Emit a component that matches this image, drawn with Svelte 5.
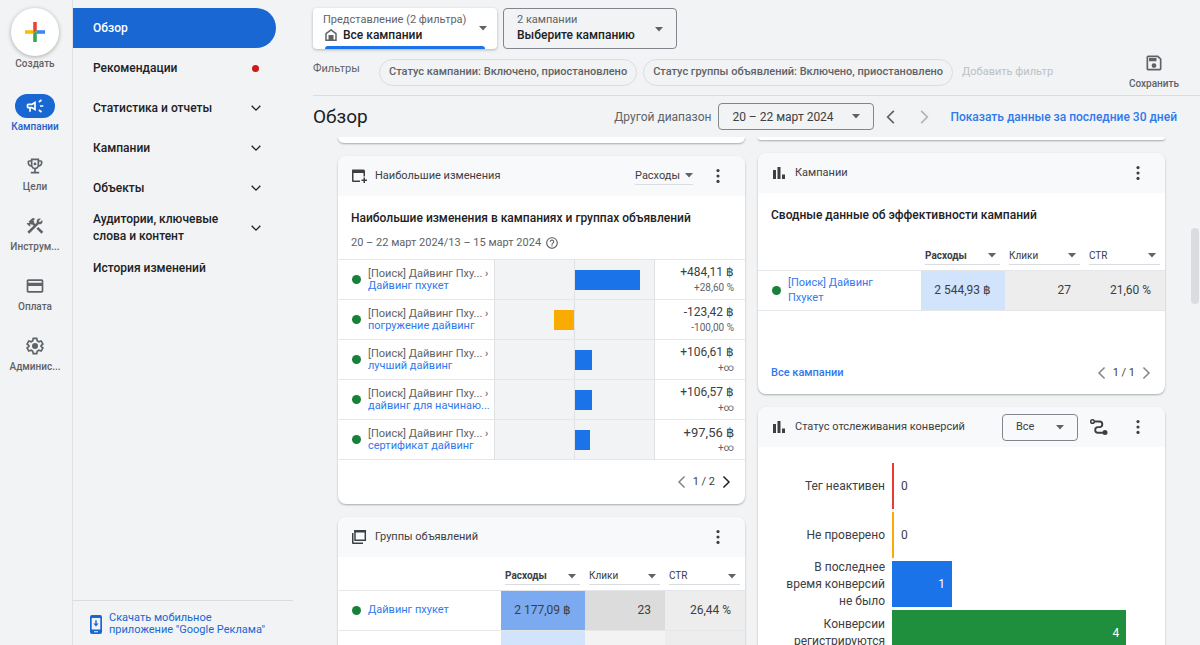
<script>
  const rail = [
    { id: "campaigns", label: "Кампании", active: true },
    { id: "goals", label: "Цели" },
    { id: "tools", label: "Инструм..." },
    { id: "billing", label: "Оплата" },
    { id: "admin", label: "Админис..." },
  ];

  const menu = [
    { label: "Обзор", active: true },
    { label: "Рекомендации", dot: true },
    { label: "Статистика и отчеты", sub: true },
    { label: "Кампании", sub: true },
    { label: "Объекты", sub: true },
    { label: "Аудитории, ключевые слова и контент", sub: true },
    { label: "История изменений" },
  ];

  const filters = [
    "Статус кампании: Включено, приостановлено",
    "Статус группы объявлений: Включено, приостановлено",
  ];

  // share is the bar length in percent of one half of the chart
  const changes = [
    { group: "Дайвинг пхукет", value: "+484,11 ฿", rate: "+28,60 %", share: 83 },
    { group: "погружение дайвинг", value: "-123,42 ฿", rate: "-100,00 %", share: -25 },
    { group: "лучший дайвинг", value: "+106,61 ฿", rate: "+∞", share: 22 },
    { group: "дайвинг для начинаю...", value: "+106,57 ฿", rate: "+∞", share: 22 },
    { group: "сертификат дайвинг", value: "+97,56 ฿", rate: "+∞", share: 20, large: true },
  ];

  const columns = ["Расходы", "Клики", "CTR"];

  const statuses = [
    { label: "Тег неактивен", count: 0, color: "#ea3a33" },
    { label: "Не проверено", count: 0, color: "#fbab04" },
    { label: "В последнее время конверсий не было", count: 1, color: "#1a73e8" },
    { label: "Конверсии регистрируются", count: 4, color: "#1f8f3d" },
  ];
</script>

{#snippet caret()}
  <svg class="caret" viewBox="0 0 8 5" width="8" height="5" aria-hidden="true"><path d="M0 0h8L4 4.6z" /></svg>
{/snippet}

{#snippet chevron(dir)}
  <svg class="chevron {dir}" viewBox="0 0 24 24" width="20" height="20" aria-hidden="true">
    {#if dir === "left"}
      <path d="M15.4 4.6 8 12l7.4 7.4" />
    {:else if dir === "right"}
      <path d="M8.6 4.6 16 12l-7.4 7.4" />
    {:else}
      <path d="M6.8 9.4 12 14.6l5.2-5.2" />
    {/if}
  </svg>
{/snippet}

{#snippet more()}
  <button class="icon-btn more" aria-label="Ещё">
    <svg viewBox="0 0 24 24" width="20" height="20"><circle cx="12" cy="5.500" r="1.900" /><circle cx="12" cy="12" r="1.900" /><circle cx="12" cy="18.500" r="1.900" /></svg>
  </button>
{/snippet}

{#snippet bars()}
  <svg class="card-icon" viewBox="0 0 16 16" width="16" height="16" aria-hidden="true">
    <path d="M2 5h3v9H2zM6.500 2h3v12h-3zM11 9.500h3V14h-3z" />
  </svg>
{/snippet}

{#snippet railIcon(id)}
  <svg viewBox="0 0 24 24" width="20" height="20" aria-hidden="true">
    {#if id === "campaigns"}
      <path d="M18 11v2h4v-2h-4zm-2 6.610c.96.71 2.210 1.650 3.200 2.390.4-.53.8-1.070 1.200-1.600-.99-.74-2.240-1.680-3.200-2.400-.4.540-.8 1.080-1.200 1.610zM20.400 5.600c-.4-.53-.8-1.070-1.200-1.600-.99.74-2.240 1.680-3.200 2.400.4.530.8 1.070 1.200 1.600.96-.72 2.210-1.650 3.200-2.400zM4 9c-1.100 0-2 .9-2 2v2c0 1.100.9 2 2 2h1v4h2v-4h1l5 3V6L8 9H4zm5.030 1.710L11 9.530v4.940l-1.970-1.180-.48-.29H4v-2h4.550l.48-.29z" />
    {:else if id === "goals"}
      <path d="M19 5h-2V3H7v2H5c-1.100 0-2 .9-2 2v1c0 2.550 1.920 4.630 4.390 4.940A5.010 5.010 0 0 0 11 15.900V19H7v2h10v-2h-4v-3.100a5.010 5.010 0 0 0 3.610-2.960C19.080 12.630 21 10.550 21 8V7c0-1.100-.9-2-2-2zM5 8V7h2v3.820C5.840 10.400 5 9.300 5 8zm7 6c-1.650 0-3-1.350-3-3V5h6v6c0 1.650-1.350 3-3 3zm7-6c0 1.300-.84 2.400-2 2.820V7h2v1z" />
      <circle cx="12" cy="9.500" r="1.700" />
    {:else if id === "tools"}
      <path d="m13.783 15.172 2.121-2.121 5.996 5.996-2.121 2.121zM17.500 10c1.930 0 3.500-1.570 3.500-3.500 0-.58-.16-1.120-.41-1.600l-2.700 2.700-1.490-1.490 2.700-2.700c-.48-.25-1.020-.41-1.600-.41C15.570 3 14 4.570 14 6.500c0 .41.080.8.210 1.160l-1.850 1.850-1.780-1.780.71-.71-1.410-1.410L12 3.490a3 3 0 0 0-4.240 0L4.220 7.030l1.410 1.410H2.810l-.71.71 3.540 3.540.71-.71V9.150l1.410 1.410.71-.71 1.780 1.780-7.410 7.410 2.120 2.120L16.340 9.790c.36.130.75.210 1.160.210z" />
    {:else if id === "billing"}
      <path d="M20 4H4c-1.110 0-1.990.89-1.990 2L2 18c0 1.110.89 2 2 2h16c1.110 0 2-.89 2-2V6c0-1.110-.89-2-2-2zm0 14H4v-6h16v6zm0-10H4V6h16v2z" />
    {:else}
      <path class="line" d="M9.900 2.900h4.200l.6 2.900 1.900 1.100 2.800-1 2.100 3.700-2.200 1.900v1l2.200 1.900-2.100 3.700-2.800-1-1.900 1.100-.6 2.900H9.900l-.6-2.900-1.900-1.100-2.800 1-2.100-3.700 2.200-1.900v-1L2.500 9.600l2.100-3.700 2.800 1 1.900-1.100z" />
      <circle cx="12" cy="12" r="3.600" />
    {/if}
  </svg>
{/snippet}

{#snippet metricHead()}
  <thead>
    <tr>
      <td></td>
      {#each columns as column, i}
        <th class:bold={i === 0}>
          <span class="drop metric">
            <select aria-label={column}><option>{column}</option></select>
            {@render caret()}
          </span>
        </th>
      {/each}
    </tr>
  </thead>
{/snippet}

<div class="app">
  <nav class="rail" aria-label="Разделы">
    <button class="create">
      <span class="fab">
        <svg viewBox="0 0 20 20" width="20" height="20" aria-hidden="true">
          <path fill="#ea4335" d="M8.200 0h3.600v8.200L8.200 11.800z" />
          <path fill="#fbbc04" d="M0 8.200h8.200v3.600H0z" />
          <path fill="#4285f4" d="M11.800 8.200H20v3.600h-8.200z" />
          <path fill="#34a853" d="M8.200 11.800l3.600-3.600V20H8.200z" />
        </svg>
      </span>
      Создать
    </button>
    {#each rail as item}
      <a class="rail-item" class:active={item.active} href="#{item.id}">
        <span class="pill">{@render railIcon(item.id)}</span>
        {item.label}
      </a>
    {/each}
  </nav>

  <aside class="side">
    <ul>
      {#each menu as item}
        <li>
          <a class="menu-item" class:active={item.active} href="#menu">
            <span>{item.label}</span>
            {#if item.dot}<i class="alert"></i>{/if}
            {#if item.sub}{@render chevron("down")}{/if}
          </a>
        </li>
      {/each}
    </ul>
    <a class="download" href="#download">
      <svg viewBox="0 0 12 19" width="12" height="19" aria-hidden="true">
        <path fill-rule="evenodd" d="M2 0h8a2 2 0 0 1 2 2v15a2 2 0 0 1-2 2H2a2 2 0 0 1-2-2V2a2 2 0 0 1 2-2zm-.300 3v11.500h8.600V3zM4 16.200v1h4v-1z" />
        <path d="M5.300 5.200h1.400v3.400h1.900L6 11.400 3.400 8.600h1.900z" />
      </svg>
      <span>Скачать мобильное приложение "Google Реклама"</span>
    </a>
  </aside>

  <main>
    <header>
      <div class="pickers">
        <div class="picker view">
          <label for="view">Представление (2 фильтра)</label>
          <div class="drop">
            <svg class="home" viewBox="0 0 12 12" width="12" height="12" aria-hidden="true">
              <path class="line" d="M1 11.300V4.600L6 .9l5 3.700v6.700z" />
              <path d="M3.500 6h5v5.500h-5z" />
            </svg>
            <select id="view"><option>Все кампании</option></select>
          </div>
          {@render caret()}
        </div>
        <div class="picker">
          <label for="campaign">2 кампании</label>
          <div class="drop">
            <select id="campaign"><option>Выберите кампанию</option></select>
          </div>
          {@render caret()}
        </div>
      </div>

      <div class="filters">
        <span class="filters-label">Фильтры</span>
        {#each filters as filter}
          <button class="chip">{filter}</button>
        {/each}
        <button class="add">Добавить фильтр</button>
        <button class="save">
          <svg viewBox="0 0 24 24" width="20" height="20" aria-hidden="true">
            <path d="M17 3H5a2 2 0 0 0-2 2v14c0 1.100.9 2 2 2h14c1.100 0 2-.9 2-2V7zm2 16H5V5h11.170L19 7.830zM12 12.200a2.900 2.900 0 1 0 0 5.800 2.900 2.900 0 0 0 0-5.800zM6 6h9v4H6z" />
          </svg>
          Сохранить
        </button>
      </div>
    </header>

    <div class="title-row">
      <h1>Обзор</h1>
      <span class="range-label">Другой диапазон</span>
      <button class="range">20 – 22 март 2024 {@render caret()}</button>
      <button class="icon-btn step" aria-label="Назад">{@render chevron("left")}</button>
      <button class="icon-btn step" aria-label="Вперёд" disabled>{@render chevron("right")}</button>
      <a class="last30" href="#last30">Показать данные за последние 30 дней</a>
    </div>

    <div class="board">
      <div class="column">
        <div class="card rest tall"></div>

        <section class="card">
          <div class="card-head">
            <svg class="card-icon" viewBox="0 0 16 16" width="16" height="16" aria-hidden="true">
              <path d="M1.500 1.500h11A1.500 1.500 0 0 1 14 3v5.500h-1.500V5h-10v7.500H9V14H2a1 1 0 0 1-1-1V2z" />
              <path d="M12.500 9.500H14v2h2V13h-2v2h-1.500v-2h-2v-1.500h2z" />
            </svg>
            <h2>Наибольшие изменения</h2>
            <span class="drop small">
              <select aria-label="Показатель"><option>Расходы</option></select>
              {@render caret()}
            </span>
            {@render more()}
          </div>
          <h3>Наибольшие изменения в кампаниях и группах объявлений</h3>
          <p class="period">
            20 – 22 март 2024/13 – 15 март 2024
            <svg viewBox="0 0 24 24" width="14" height="14" aria-hidden="true">
              <path d="M11 18h2v-2h-2v2zm1-16C6.480 2 2 6.480 2 12s4.480 10 10 10 10-4.480 10-10S17.520 2 12 2zm0 18c-4.410 0-8-3.590-8-8s3.590-8 8-8 8 3.590 8 8-3.590 8-8 8zm0-14c-2.210 0-4 1.790-4 4h2c0-1.100.9-2 2-2s2 .9 2 2c0 2-3 1.750-3 5h2c0-2.250 3-2.500 3-5 0-2.210-1.790-4-4-4z" />
            </svg>
          </p>
          <table class="changes">
            <tbody>
              {#each changes as row}
                <tr>
                  <th>
                    <div class="entity">
                      <i class="dot"></i>
                      <span class="names">
                        <span class="parent">[Поиск] Дайвинг Пху... <b>›</b></span>
                        <a href="#group">{row.group}</a>
                      </span>
                    </div>
                  </th>
                  <td class="plot">
                    <div class="track">
                      <div class="half neg">
                        {#if row.share < 0}<i style="width: {-row.share}%"></i>{/if}
                      </div>
                      <div class="half pos">
                        {#if row.share > 0}<i style="width: {row.share}%"></i>{/if}
                      </div>
                    </div>
                  </td>
                  <td class="delta">
                    <span class="amount" class:large={row.large}>{row.value}</span>
                    <span class="rate">{row.rate}</span>
                  </td>
                </tr>
              {/each}
            </tbody>
          </table>
          <div class="card-foot">
            <div class="pager">
              <button aria-label="Назад">{@render chevron("left")}</button>
              <span>1 / 2</span>
              <button class="on" aria-label="Вперёд">{@render chevron("right")}</button>
            </div>
          </div>
        </section>

        <section class="card">
          <div class="card-head">
            <svg class="card-icon" viewBox="0 0 16 16" width="16" height="16" aria-hidden="true">
              <path class="line" d="M4 1.700h10.300v9.600H4z" />
              <path d="M3.200 1h11.800v2.500H3.200zM1 4h1.500v9.500H12V15H2a1 1 0 0 1-1-1z" />
            </svg>
            <h2>Группы объявлений</h2>
            {@render more()}
          </div>
          <table class="metrics">
            {@render metricHead()}
            <tbody>
              <tr>
                <th><div class="entity"><i class="dot"></i><a href="#group">Дайвинг пхукет</a></div></th>
                <td class="blue-3">2 177,09 ฿</td>
                <td class="gray-3">23</td>
                <td class="gray-2">26,44 %</td>
              </tr>
              <tr>
                <th></th>
                <td class="blue-1"></td>
                <td class="gray-1"></td>
                <td class="gray-2"></td>
              </tr>
            </tbody>
          </table>
        </section>
      </div>

      <div class="column">
        <div class="card rest"></div>

        <section class="card">
          <div class="card-head">
            {@render bars()}
            <h2>Кампании</h2>
            {@render more()}
          </div>
          <h3>Сводные данные об эффективности кампаний</h3>
          <table class="metrics">
            {@render metricHead()}
            <tbody>
              <tr>
                <th><div class="entity"><i class="dot"></i><a class="wrap" href="#campaign">[Поиск] Дайвинг Пхукет</a></div></th>
                <td class="blue-1">2 544,93 ฿</td>
                <td class="gray-2">27</td>
                <td class="gray-2">21,60 %</td>
              </tr>
            </tbody>
          </table>
          <div class="card-foot spaced">
            <a href="#all">Все кампании</a>
            <div class="pager">
              <button aria-label="Назад">{@render chevron("left")}</button>
              <span>1 / 1</span>
              <button aria-label="Вперёд">{@render chevron("right")}</button>
            </div>
          </div>
        </section>

        <section class="card">
          <div class="card-head">
            {@render bars()}
            <h2>Статус отслеживания конверсий</h2>
            <span class="drop boxed">
              <select aria-label="Статус"><option>Все</option></select>
              {@render caret()}
            </span>
            <button class="icon-btn" aria-label="Путь">
              <svg viewBox="0 0 20 20" width="20" height="20">
                <path class="line path" d="M4.500 4.500h6a2.800 2.800 0 0 1 0 5.600H9a2.800 2.800 0 0 0 0 5.600h6" />
                <circle cx="16" cy="15.600" r="2.500" />
                <circle class="line ring" cx="3.500" cy="4.500" r="1.800" />
              </svg>
            </button>
            {@render more()}
          </div>
          <div class="statuses">
            {#each statuses as status}
              <div class="status">
                <span class="status-label">{status.label}</span>
                <div class="status-track">
                  <div class="status-bar" style="width: calc(2px + {status.count * 21.9}%); background: {status.color}">
                    {#if status.count}<span>{status.count}</span>{/if}
                  </div>
                  {#if !status.count}<span>0</span>{/if}
                </div>
              </div>
            {/each}
          </div>
        </section>
      </div>
      <i class="thumb"></i>
    </div>
  </main>
</div>

<style>
  :global(body) {
    margin: 0;
    background: #f1f3f4;
  }

  .app {
    display: flex;
    height: 100vh;
    overflow: hidden;
    color: #3c4043;
    font: 400 12px/16px Roboto, "Liberation Sans", sans-serif;
  }

  * {
    box-sizing: border-box;
  }

  button,
  select {
    margin: 0;
    padding: 0;
    border: 0;
    background: none;
    color: inherit;
    font: inherit;
    appearance: none;
  }

  a {
    color: #3079ed;
    text-decoration: none;
  }

  h1,
  h2,
  h3,
  p,
  ul {
    margin: 0;
    padding: 0;
    font-weight: 400;
    list-style: none;
  }

  svg {
    display: block;
    flex: none;
    fill: currentColor;
  }

  .line {
    fill: none;
    stroke: currentColor;
    stroke-width: 1.5;
  }

  .chevron {
    fill: none;
    stroke: currentColor;
    stroke-width: 2;
  }

  .chevron.down {
    stroke-width: 1.6;
  }

  /* left rail */
  .rail {
    display: flex;
    flex: none;
    flex-direction: column;
    align-items: center;
    gap: 19px;
    width: 73px;
    padding: 8px 2px 0 0;
    border-right: 1px solid #dfe1e5;
    color: #5f6368;
    font-size: 10px;
    font-weight: 500;
  }

  .create {
    display: flex;
    flex-direction: column;
    align-items: center;
    margin-bottom: 3px;
  }

  .fab {
    display: flex;
    align-items: center;
    justify-content: center;
    width: 48px;
    height: 48px;
    border-radius: 50%;
    background: #fff;
    box-shadow: 0 1px 4px rgba(60, 64, 67, 0.4);
  }

  .rail-item {
    display: flex;
    flex-direction: column;
    align-items: center;
    gap: 1px;
    color: inherit;
  }

  .pill {
    display: flex;
    align-items: center;
    justify-content: center;
    width: 40px;
    height: 24px;
    border-radius: 12px;
  }

  .rail-item.active {
    color: #2a5fc4;
  }

  .active .pill {
    background: #1967d2;
    color: #fff;
  }

  .rail .line {
    stroke-width: 2;
  }

  /* menu */
  .side {
    display: flex;
    flex: none;
    flex-direction: column;
    justify-content: space-between;
    width: 220px;
    padding-top: 8px;
  }

  .menu-item {
    display: flex;
    align-items: center;
    justify-content: space-between;
    width: 203px;
    min-height: 40px;
    padding: 3px 10px 3px 20px;
    border-radius: 0 20px 20px 0;
    color: #202124;
    font-size: 12px;
    font-weight: 500;
    line-height: 17px;
  }

  .menu-item span {
    max-width: 140px;
  }

  .menu-item.active {
    background: #1967d2;
    color: #fff;
  }

  .alert {
    width: 7px;
    height: 7px;
    margin-right: 7px;
    border-radius: 50%;
    background: #d3161b;
  }

  .download {
    display: flex;
    align-items: center;
    gap: 7px;
    height: 45px;
    padding: 2px 20px 0 17px;
    border-top: 1px solid #dadce0;
    color: #1967d2;
    font-size: 11px;
    line-height: 12px;
  }

  /* top of the page */
  main {
    display: flex;
    flex: 1;
    flex-direction: column;
    min-width: 0;
    padding-left: 20px;
  }

  header {
    padding-top: 8px;
    border-bottom: 1px solid #dadce0;
  }

  .pickers {
    display: flex;
    gap: 6px;
  }

  .picker {
    position: relative;
    width: 174px;
    height: 41px;
    padding: 4px 13px;
    border: 1px solid #80868b;
    border-radius: 4px;
    color: #202124;
    font-size: 12px;
    font-weight: 500;
  }

  .picker label {
    display: block;
    color: #5f6368;
    font-size: 11px;
    font-weight: 400;
    line-height: 14px;
  }

  .picker.view {
    width: 184px;
    padding: 5px 10px;
    border: 0;
    background: #fff;
    box-shadow: 0 1px 3px rgba(60, 64, 67, 0.35);
  }

  .picker.view::after {
    position: absolute;
    right: 12px;
    bottom: 0;
    left: 12px;
    height: 3px;
    border-radius: 3px 3px 0 0;
    background: #1a73e8;
    content: "";
  }

  .caret {
    color: #5f6368;
  }

  .picker > .caret {
    position: absolute;
    top: 18px;
    right: 13px;
  }

  .view > .caret {
    right: 10px;
  }

  .drop {
    display: flex;
    align-items: center;
  }

  .home {
    margin: 0 6px 0 2px;
    color: #5f6368;
  }

  .filters {
    display: flex;
    align-items: center;
    height: 46px;
    color: #5f6368;
    font-size: 11px;
  }

  .filters-label {
    width: 66px;
    padding-bottom: 7px;
  }

  .chip {
    height: 27px;
    margin-right: 6px;
    padding: 0 9px;
    border: 1px solid #dadce0;
    border-radius: 14px;
    font-weight: 500;
  }

  .add {
    margin-left: 3px;
    color: #bdc1c6;
  }

  .save {
    display: flex;
    flex-direction: column;
    align-items: center;
    gap: 3px;
    margin: 0 21px 0 auto;
    padding-top: 1px;
    font-size: 10px;
    font-weight: 500;
  }

  .title-row {
    display: flex;
    flex: none;
    align-items: center;
    height: 41px;
    padding-right: 23px;
  }

  h1 {
    margin-right: auto;
    color: #202124;
    font-size: 19px;
    line-height: 24px;
  }

  .range-label {
    color: #5f6368;
  }

  .range {
    display: flex;
    align-items: center;
    justify-content: space-between;
    width: 156px;
    height: 27px;
    margin: 0 7px;
    padding: 0 13px;
    border: 1px solid #80868b;
    border-radius: 4px;
  }

  .icon-btn {
    color: #3c4043;
  }

  .step {
    margin-right: 13px;
    color: #5f6368;
  }

  .step:disabled {
    color: #b0b4b8;
  }

  .last30 {
    margin-left: 3px;
    font-weight: 500;
  }

  /* cards */
  .board {
    position: relative;
    display: grid;
    flex: 1;
    grid-template-columns: 1fr 1fr;
    gap: 13px;
    min-height: 0;
    padding: 0 35px 0 25px;
    overflow: hidden;
  }

  .thumb {
    position: absolute;
    top: 91px;
    right: 1px;
    width: 8px;
    height: 76px;
    border-radius: 4px;
    background: #dadce0;
  }

  .column {
    display: flex;
    flex-direction: column;
    gap: 13px;
    min-width: 0;
  }

  .card {
    flex: none;
    overflow: hidden;
    border-radius: 8px;
    background: #fff;
    box-shadow: 0 1px 2px rgba(60, 64, 67, 0.4);
  }

  .rest {
    height: 3px;
    border-radius: 0 0 8px 8px;
  }

  .rest.tall {
    height: 6px;
  }

  .card-head {
    display: flex;
    align-items: center;
    height: 40px;
    padding: 0 17px 0 13px;
    background: #f8f9fa;
  }

  .card-icon {
    margin-right: 8px;
  }

  h2 {
    margin-right: auto;
    font-size: 11px;
  }

  .drop.small {
    gap: 4px;
    margin-right: 15px;
    border-bottom: 1px solid #dadce0;
    font-size: 11px;
  }

  .drop.boxed {
    position: relative;
    width: 76px;
    margin-right: 11px;
    border: 1px solid #80868b;
    border-radius: 4px;
    font-size: 11px;
  }

  .boxed select {
    width: 100%;
    height: 25px;
    padding: 0 13px;
  }

  .boxed .caret {
    position: absolute;
    right: 13px;
    pointer-events: none;
  }

  .drop.boxed + .icon-btn {
    margin-right: 19px;
  }

  .path {
    stroke-width: 1.9;
  }

  .ring {
    fill: #f8f9fa;
  }

  h3 {
    padding: 14px 13px 0;
    color: #202124;
    font-size: 12px;
    font-weight: 500;
  }

  .period {
    display: flex;
    align-items: center;
    gap: 4px;
    padding: 9px 13px 8px;
    color: #5f6368;
    font-size: 11px;
  }

  table {
    width: 100%;
    border-collapse: collapse;
    table-layout: fixed;
  }

  th,
  td {
    padding: 0;
    font-weight: 400;
    text-align: left;
  }

  tbody tr {
    height: 40px;
    border-top: 1px solid #e4e6e9;
  }

  .changes {
    border-bottom: 1px solid #e4e6e9;
  }

  .entity {
    display: flex;
    align-items: center;
    gap: 7px;
    padding-left: 14px;
    font-size: 11px;
  }

  .dot {
    flex: none;
    width: 9px;
    height: 9px;
    border-radius: 50%;
    background: #188038;
  }

  .names {
    display: flex;
    flex-direction: column;
    line-height: 12px;
    white-space: nowrap;
  }

  .parent {
    color: #5f6368;
  }

  .parent b {
    font-weight: 500;
  }

  .plot {
    width: 160px;
    border: solid #dfe1e5;
    border-width: 0 1px;
    background: #f1f3f4;
  }

  .track {
    display: flex;
    height: 39px;
  }

  .half {
    display: flex;
    flex: 1;
    align-items: center;
  }

  .half i {
    height: 20px;
    background: #1a73e8;
  }

  .neg {
    justify-content: flex-end;
    border-right: 1px solid #dfe1e5;
  }

  .neg i {
    background: #f9ab00;
  }

  .delta {
    width: 91px;
    padding-right: 11px;
    text-align: right;
  }

  .amount,
  .rate {
    display: block;
    line-height: 15px;
  }

  .amount.large {
    font-size: 13px;
  }

  .rate {
    color: #5f6368;
    font-size: 10px;
  }

  .card-foot {
    display: flex;
    align-items: center;
    justify-content: flex-end;
    height: 44px;
    padding: 0 10px 0 13px;
    font-size: 11px;
    font-weight: 500;
  }

  .card-foot.spaced {
    justify-content: space-between;
    height: 84px;
    padding-top: 40px;
    border-top: 1px solid #e4e6e9;
  }

  .pager {
    display: flex;
    align-items: center;
    gap: 2px;
    font-weight: 400;
  }

  .pager button {
    color: #80868b;
  }

  .pager .on {
    color: #202124;
  }

  .pager svg {
    width: 18px;
    height: 18px;
  }

  .metrics thead td {
    width: auto;
    height: 33px;
  }

  .metrics thead th {
    width: 80px;
    padding: 7px 5px 0 4px;
    font-size: 10px;
  }

  .metrics thead th.bold {
    width: 84px;
    font-weight: 700;
  }

  .metric {
    justify-content: space-between;
    padding-right: 4px;
    border-bottom: 1px solid #dadce0;
  }

  h3 + .metrics thead td {
    height: 47px;
  }

  h3 + .metrics thead th {
    padding-top: 20px;
  }

  .metrics tbody td {
    padding-right: 14px;
    text-align: right;
  }

  .wrap {
    width: 90px;
    line-height: 15px;
  }

  .blue-3 {
    background: #7baaf0;
  }

  .blue-1 {
    background: #d2e3fc;
  }

  .gray-3 {
    background: #dcdcdc;
  }

  .gray-2 {
    background: #ededed;
  }

  .gray-1 {
    background: #f3f3f3;
  }

  /* conversion statuses */
  .statuses {
    display: flex;
    flex-direction: column;
    gap: 3px;
    padding: 16px 8px 15px 18px;
    line-height: 17px;
  }

  .status {
    display: flex;
    align-items: center;
    gap: 7px;
    height: 46px;
  }

  .status-label {
    flex: none;
    width: 109px;
    text-align: right;
  }

  .status-track {
    display: flex;
    flex: 1;
    align-items: center;
    gap: 7px;
    height: 100%;
  }

  .status-bar {
    display: flex;
    align-items: center;
    justify-content: flex-end;
    height: 100%;
    color: #fff;
  }

  .status-bar span {
    padding-right: 7px;
  }
</style>
